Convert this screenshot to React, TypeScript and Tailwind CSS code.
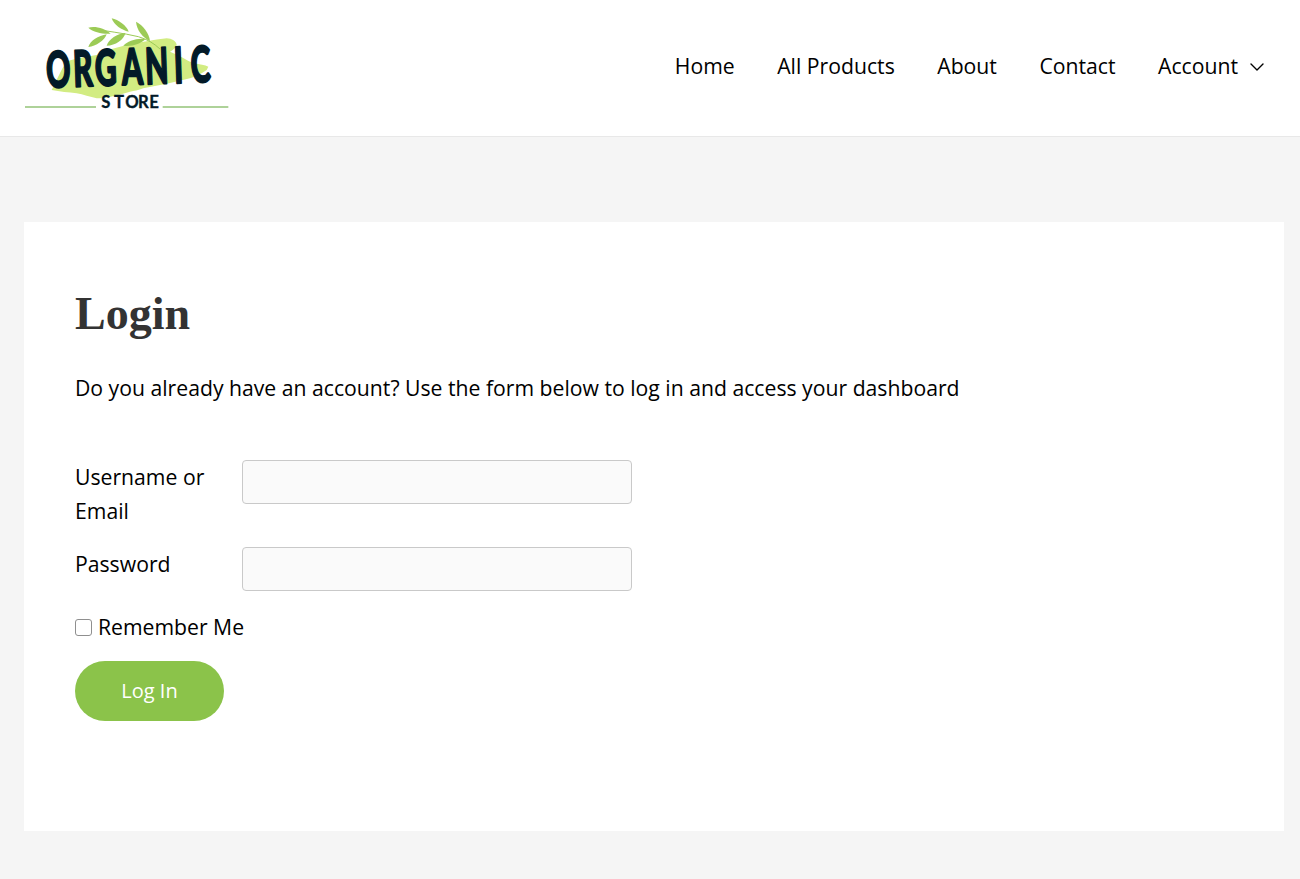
import { ChevronDown } from "lucide-react";

const NAV = ["Home", "All Products", "About", "Contact"];
const INK = "#031a28";

// drawn in 3x units of the logo crop, hence the odd viewBox
function Logo() {
  return (
    <svg width="210" height="110" viewBox="42 24 630 330" className="block">
      <path
        d="M125 255 C140 225 155 190 170 170 C200 158 235 155 260 150 C290 135 320 128 350 120 C390 112 430 105 470 100 C485 100 500 110 500 120 C497 130 488 136 480 140 C505 150 530 165 550 175 C570 178 585 180 595 185 L590 195 C575 205 558 214 540 220 C495 232 445 242 400 250 C385 256 372 258 360 260 C325 270 290 280 260 280 C240 276 220 268 200 265 C175 262 150 260 125 255 Z"
        fill="#d2ec82"
      />
      <g fill="#9ccb56">
        <path d="M235 68 C255 62 285 70 302 86 C280 88 250 82 235 68 Z" />
        <path d="M305 40 C325 44 350 62 356 80 C335 76 312 60 305 40 Z" />
        <path d="M378 50 C398 60 418 85 420 108 C398 98 380 75 378 50 Z" />
        <path d="M235 126 C240 108 265 92 290 88 C284 106 258 124 235 126 Z" />
        <path d="M290 122 C296 102 322 86 346 84 C342 104 316 122 290 122 Z" />
        <path d="M340 122 C352 108 382 98 406 102 C394 116 364 126 340 122 Z" />
      </g>
      <path d="M240 70 C285 78 340 84 385 95 C410 102 432 115 450 132" fill="none" stroke="#9ccb56" strokeWidth="3" />
      <g transform="translate(110 248) rotate(-2) scale(0.6 1)">
        <text
          x="0 135 244 378 496 640 724"
          y="0"
          fill={INK}
          stroke={INK}
          strokeWidth="6"
          strokeLinejoin="round"
          fontFamily="Lato, sans-serif"
          fontWeight="900"
          fontSize="150"
        >
          ORGANIC
        </text>
      </g>
      <text
        x="274 312 346 384 418"
        y="308"
        fill={INK}
        stroke={INK}
        strokeWidth="1"
        fontFamily="Lato, sans-serif"
        fontWeight="700"
        fontSize="50"
      >
        STORE
      </text>
      <path d="M45 306 H258 M458 306 H655" stroke="#5fa535" strokeWidth="3.5" />
    </svg>
  );
}

export default function App() {
  return (
    <div className="min-h-screen bg-[#f5f5f5] font-['Open_Sans',sans-serif] text-black">
      <header className="flex h-[137px] items-center justify-between border-b border-[#e8e8e8] bg-white pl-6 pr-[31px]">
        <Logo />
        <nav className="flex items-center gap-[42.5px] text-[21.2px]">
          {NAV.map((item) => (
            <a key={item} className="mb-[5px]">
              {item}
            </a>
          ))}
          <a className="mb-[5px] flex items-center gap-[7px]">
            Account
            <ChevronDown size={24} strokeWidth={1.4} className="mt-[3px]" />
          </a>
        </nav>
      </header>
      <main className="pl-6 pr-4 pt-[85px]">
        <div className="h-[609px] bg-white px-[51px] pt-[62px]">
          <h1 className="font-['Liberation_Serif',serif] text-[46px] leading-[60px] font-bold text-[#333]">Login</h1>
          <p className="mt-[27px] text-[21.2px] leading-[34px]">
            Do you already have an account? Use the form below to log in and access your dashboard
          </p>
          <form className="mt-[55px]">
            <div className="flex">
              <label className="w-[167px] pr-4 text-[21.2px] leading-[34px]">Username or Email</label>
              <input className="h-[44px] w-[390px] rounded-[4px] border border-[#c9c9c9] bg-[#fafafa]" />
            </div>
            <div className="mt-[19px] flex">
              <label className="w-[167px] text-[21.2px] leading-[34px]">Password</label>
              <input className="h-[44px] w-[390px] rounded-[4px] border border-[#c9c9c9] bg-[#fafafa]" />
            </div>
            <label className="mt-[19px] flex items-center text-[21.2px] leading-[34px]">
              <span className="mr-[6px] h-[17px] w-[17px] rounded-[3px] border border-[#8f8f8f] bg-white" />
              Remember Me
            </label>
            <button
              type="button"
              className="mt-[17px] h-[60px] w-[149px] rounded-full bg-[#8bc34a] text-[20px] text-white"
            >
              Log In
            </button>
          </form>
        </div>
      </main>
    </div>
  );
}
